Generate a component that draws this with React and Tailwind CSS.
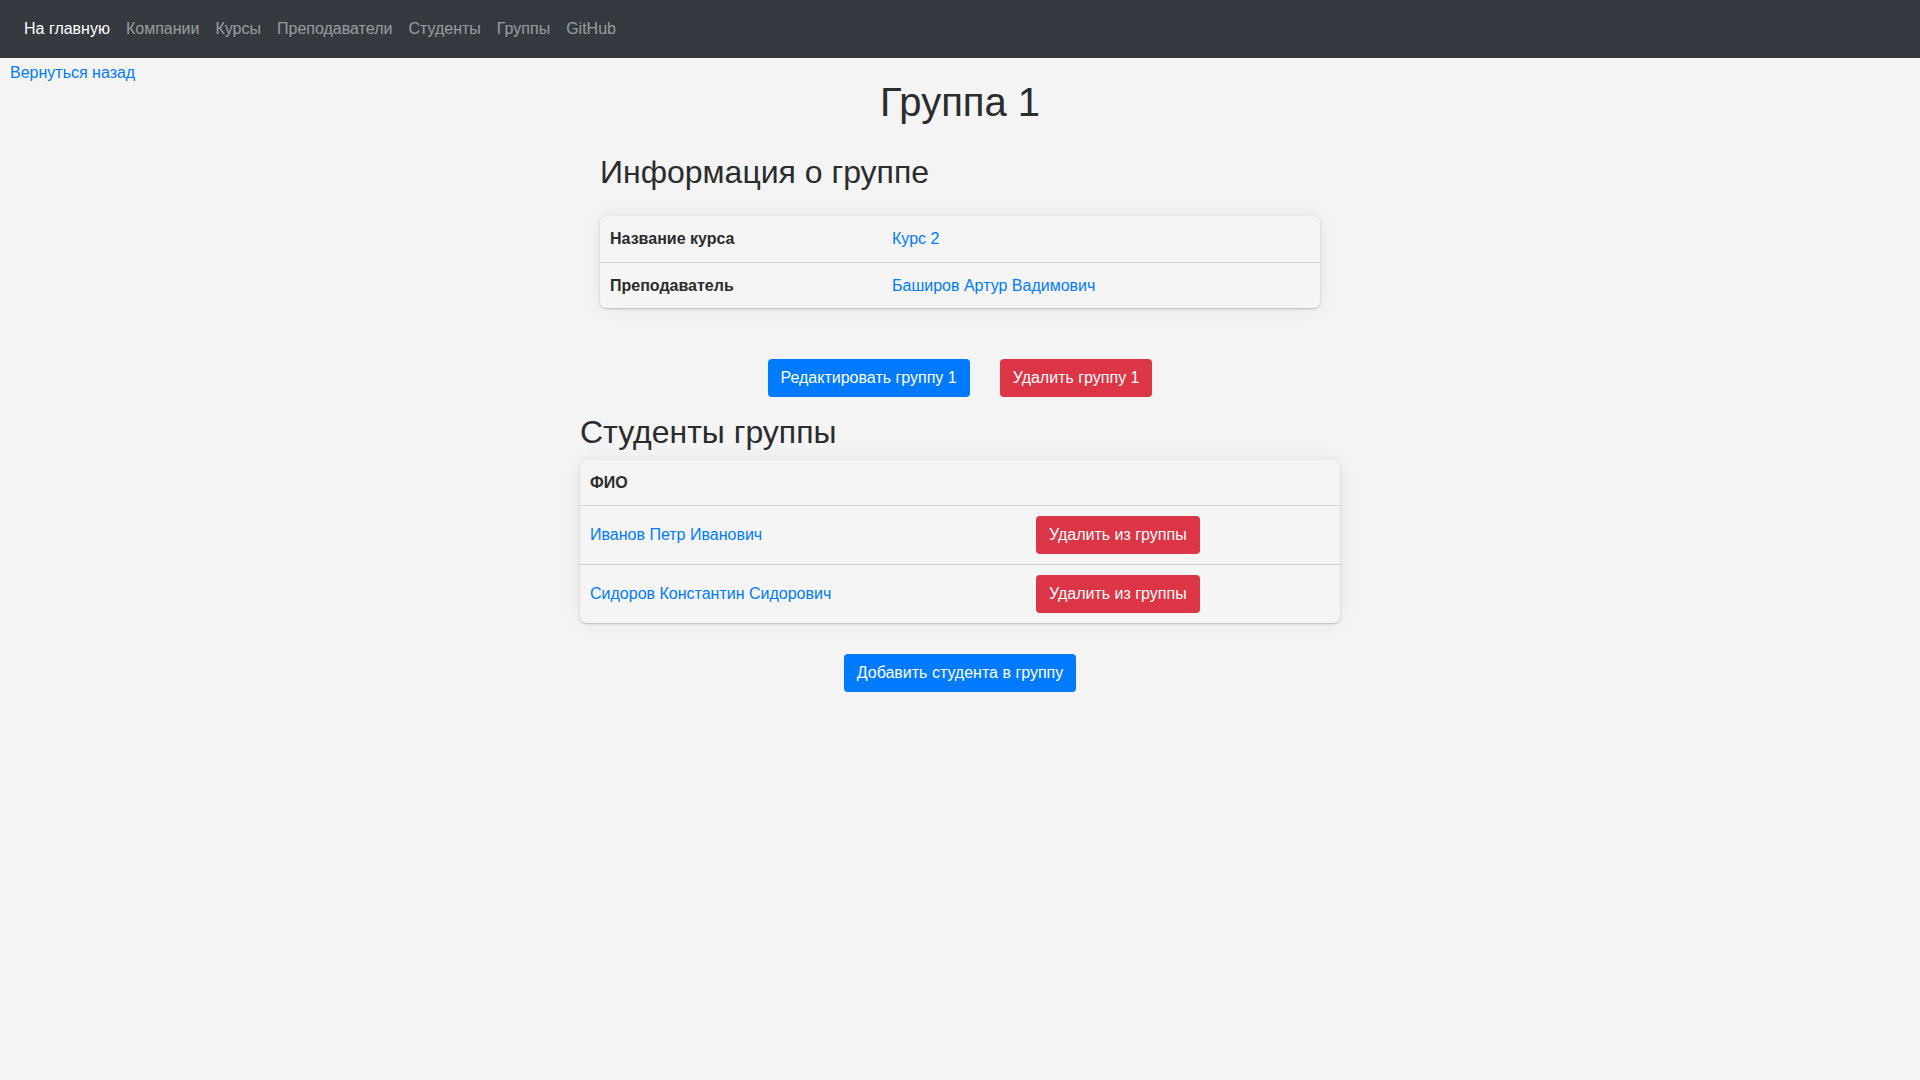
import React from 'react'

const navItems = ['На главную', 'Компании', 'Курсы', 'Преподаватели', 'Студенты', 'Группы', 'GitHub']

const students = ['Иванов Петр Иванович', 'Сидоров Константин Сидорович']

const cardClass =
  'rounded-md bg-[#f5f5f5] shadow-[0_1px_2px_rgba(0,0,0,0.22),0_0_18px_rgba(0,0,0,0.07)]'

const App = () => {
  return (
    <div className="min-h-screen bg-[#f4f4f4] font-['Liberation_Sans',Arial,sans-serif] text-base text-[#2a2c2e]">
      <nav className="flex h-[58px] items-center bg-[#343a40] px-4">
        {navItems.map((item, index) => (
          <a
            key={item}
            href="#"
            className={`px-2 leading-6 ${index === 0 ? 'text-white' : 'text-white/50'}`}
          >
            {item}
          </a>
        ))}
      </nav>

      <div className="h-[20px] pl-[10px] pt-[3px]">
        <a href="#" className="leading-6 text-[#007bff]">
          Вернуться назад
        </a>
      </div>

      <h1 className="text-center text-[40px] font-normal leading-[48px]">Группа 1</h1>

      <section className="mx-auto w-[720px]">
        <h2 className="mt-[27px] text-[32px] font-normal leading-[38px]">Информация о группе</h2>
        <div className={`mt-[25px] ${cardClass}`}>
          <div className="grid h-[46px] grid-cols-[282px_1fr] items-center px-[10px]">
            <div className="font-bold">Название курса</div>
            <a href="#" className="text-[#007bff]">
              Курс 2
            </a>
          </div>
          <div className="grid h-[46px] grid-cols-[282px_1fr] items-center border-t border-[#d2d2d2] px-[10px]">
            <div className="font-bold">Преподаватель</div>
            <a href="#" className="text-[#007bff]">
              Баширов Артур Вадимович
            </a>
          </div>
        </div>
      </section>

      <div className="mt-[51px] flex justify-center gap-[30px]">
        <button
          type="button"
          className="h-[38px] rounded bg-[#007bff] px-[13px] leading-6 text-white"
        >
          Редактировать группу 1
        </button>
        <button
          type="button"
          className="h-[38px] rounded bg-[#dc3545] px-[13px] leading-6 text-white"
        >
          Удалить группу 1
        </button>
      </div>

      <section className="mx-auto w-[760px]">
        <h2 className="mt-[16px] text-[32px] font-normal leading-[38px]">Студенты группы</h2>
        <div className={`mt-[9px] ${cardClass}`}>
          <div className="flex h-[45px] items-center px-[10px] font-bold">ФИО</div>
          {students.map((name) => (
            <div
              key={name}
              className="grid h-[59px] grid-cols-[446px_1fr] items-center border-t border-[#d2d2d2] pl-[10px]"
            >
              <a href="#" className="text-[#007bff]">
                {name}
              </a>
              <div>
                <button
                  type="button"
                  className="h-[38px] rounded bg-[#dc3545] px-[13px] leading-6 text-white"
                >
                  Удалить из группы
                </button>
              </div>
            </div>
          ))}
        </div>
      </section>

      <div className="mt-[31px] flex justify-center">
        <button
          type="button"
          className="h-[38px] rounded bg-[#007bff] px-[13px] leading-6 text-white"
        >
          Добавить студента в группу
        </button>
      </div>
    </div>
  )
}

export default App
